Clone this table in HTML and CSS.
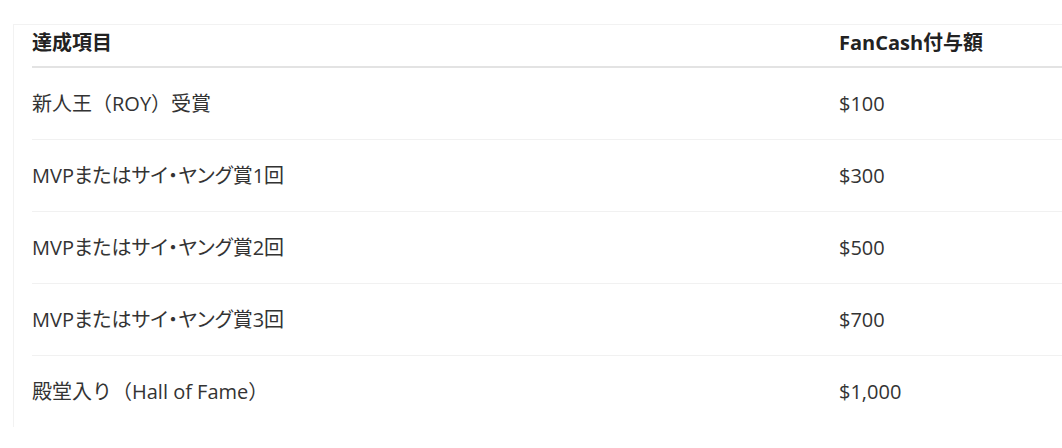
FILE: index.html
```html
<!DOCTYPE html>
<html lang="ja">
  <head>
    <meta charset="UTF-8" />
    <meta name="viewport" content="width=device-width, initial-scale=1.0" />
    <title>FanCash付与額</title>
    <link rel="stylesheet" href="styles.css">
  </head>
  <body>
    <div class="card">
      <table class="reward-table">
        <thead>
          <tr>
            <th class="col-item">達成項目</th>
            <th>FanCash付与額</th>
          </tr>
        </thead>
        <tbody>
          <tr>
            <td>新人王（ROY）受賞</td>
            <td>$100</td>
          </tr>
          <tr>
            <td class="prop">MVPまたはサイ・ヤング賞1回</td>
            <td>$300</td>
          </tr>
          <tr>
            <td class="prop">MVPまたはサイ・ヤング賞2回</td>
            <td>$500</td>
          </tr>
          <tr>
            <td class="prop">MVPまたはサイ・ヤング賞3回</td>
            <td>$700</td>
          </tr>
          <tr>
            <td>殿堂入り（Hall of Fame）</td>
            <td>$1,000</td>
          </tr>
        </tbody>
      </table>
    </div>
  </body>
</html>
```

FILE: styles.css
```css
body {
  margin: 0;
  padding: 0;
  background: #fff;
  color: #333;
  font-family: "Open Sans", "Noto Sans CJK JP", sans-serif;
  overflow: hidden;
}

.card {
  margin: 24px 0 0 13px;
  padding-left: 18px;
  border-left: 1px solid #f2f2f2;
  border-top: 1px solid #f2f2f2;
  width: 1100px;
}

.reward-table {
  width: 100%;
  border-collapse: collapse;
  font-size: 20px;
}

.reward-table th,
.reward-table td {
  text-align: left;
  padding: 0;
  line-height: 25px;
}

.reward-table th {
  font-weight: 700;
  color: #222;
  padding: 5px 0 11px;
  border-bottom: 2px solid #e3e3e3;
}

.reward-table .col-item {
  width: 807px;
}

.reward-table td {
  padding: 23px 0;
  border-bottom: 1px solid #f1f1f1;
}

.reward-table .prop {
  font-feature-settings: "palt";
}

.reward-table tbody tr:last-child td {
  border-bottom: none;
}
```
